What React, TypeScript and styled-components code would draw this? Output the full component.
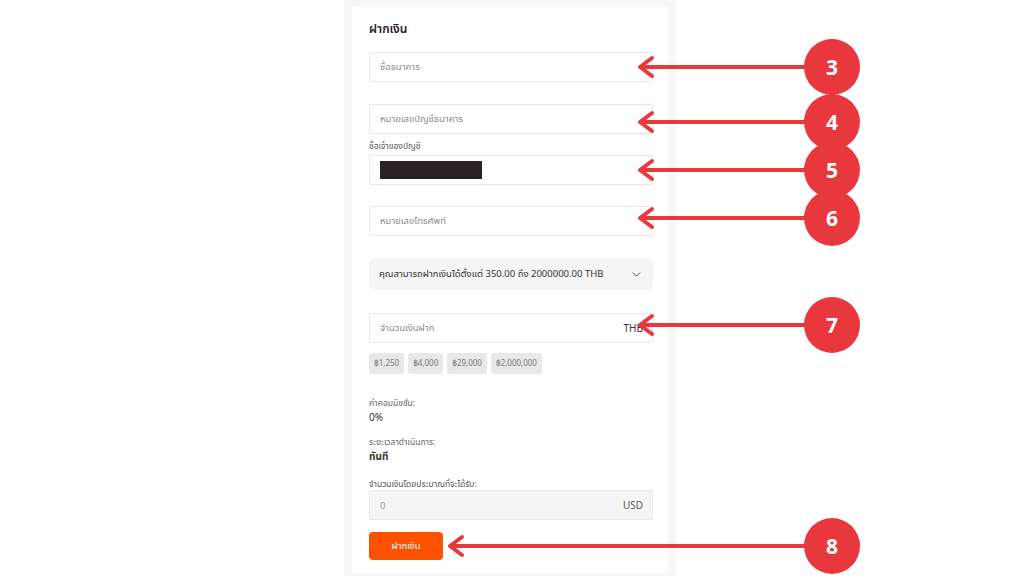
import React from "react";
import styled, { createGlobalStyle } from "styled-components";
import { ChevronDown } from "lucide-react";

const Global = createGlobalStyle`
  html, body { margin: 0; padding: 0; background: #ffffff; }
  body { font-family: "Noto Sans", "Noto Sans Thai", "Open Sans", sans-serif; color: #333; }
  * { box-sizing: border-box; }
`;

const Page = styled.div`
  position: relative;
  width: 1024px;
  height: 576px;
  overflow: hidden;
  background: #ffffff;
`;

const Panel = styled.div`
  margin-left: 344px;
  width: 332px;
  height: 576px;
  background: #f7f7f7;
  padding: 6px 8px 0 8px;
`;

const Card = styled.div`
  background: #ffffff;
  border-radius: 4px;
  padding: 14px 15px 13px 17px;
  display: flex;
  flex-direction: column;
`;

const Title = styled.div`
  font-size: 12px;
  font-weight: 600;
  line-height: 18px;
  color: #222;
  margin-bottom: 14px;
`;

const Field = styled.div<{ $gap?: number; $bg?: string }>`
  height: 30px;
  border: 1px solid #e8e8e8;
  border-radius: 2px;
  background: ${(p) => p.$bg || "#fff"};
  display: flex;
  align-items: center;
  justify-content: space-between;
  padding: 0 9px 0 10px;
  margin-top: ${(p) => p.$gap ?? 0}px;
  font-size: 9.5px;
`;

const Placeholder = styled.span<{ $color?: string }>`
  color: ${(p) => p.$color || "#8a8a8a"};
`;

const Suffix = styled.span<{ $color?: string }>`
  color: ${(p) => p.$color || "#333"};
  font-size: 10px;
`;

const SmallLabel = styled.div<{ $gap?: number }>`
  font-size: 8.5px;
  line-height: 12px;
  color: #555;
  margin-top: ${(p) => p.$gap ?? 0}px;
`;

const Masked = styled.div`
  width: 102px;
  height: 18px;
  background: #2b2222;
`;

const Info = styled.div`
  margin-top: 22px;
  height: 32px;
  background: #f5f5f5;
  border-radius: 6px;
  display: flex;
  align-items: center;
  justify-content: space-between;
  padding: 0 10px 0 10px;
  font-size: 9.5px;
  color: #333;
`;

const Chips = styled.div`
  display: flex;
  gap: 4px;
  margin-top: 10px;
`;

const Chip = styled.div`
  height: 21px;
  padding: 0 5px;
  background: #e8e8e8;
  border-radius: 3px;
  font-size: 8px;
  color: #777;
  display: flex;
  align-items: center;
`;

const StatLabel = styled.div<{ $gap: number }>`
  font-size: 8.5px;
  line-height: 14px;
  color: #666;
  margin-top: ${(p) => p.$gap}px;
`;

const StatValue = styled.div<{ $bold?: boolean }>`
  font-size: 10px;
  line-height: 14px;
  color: #333;
  font-weight: ${(p) => (p.$bold ? 700 : 400)};
`;

const Submit = styled.button`
  margin-top: 12px;
  width: 74px;
  height: 28px;
  border: none;
  border-radius: 4px;
  background: #ff5200;
  color: #fff;
  font-family: inherit;
  font-size: 9.5px;
  cursor: pointer;
`;

const Overlay = styled.svg`
  position: absolute;
  left: 0;
  top: 0;
  width: 1024px;
  height: 576px;
  pointer-events: none;
`;

const marks = [
  { n: "3", y: 67, tip: 640 },
  { n: "4", y: 122, tip: 640 },
  { n: "5", y: 170, tip: 640 },
  { n: "6", y: 218, tip: 640 },
  { n: "7", y: 325, tip: 640 },
  { n: "8", y: 546, tip: 450 },
];

const RED = "#e8383d";

function Annotations() {
  return (
    <Overlay viewBox="0 0 1024 576">
      {marks.map((m) => (
        <g key={m.n}>
          <line x1={m.tip + 2} y1={m.y} x2={810} y2={m.y} stroke={RED} strokeWidth={4} />
          <polyline
            points={`${m.tip + 12},${m.y - 9} ${m.tip},${m.y} ${m.tip + 12},${m.y + 9}`}
            fill="none"
            stroke={RED}
            strokeWidth={4}
            strokeLinecap="round"
            strokeLinejoin="round"
          />
          <circle cx={832} cy={m.y} r={28} fill={RED} />
          <text
            x={832}
            y={m.y + 7.5}
            textAnchor="middle"
            fontFamily="'Open Sans', 'Noto Sans', sans-serif"
            fontWeight={700}
            fontSize={21}
            fill="#ffffff"
          >
            {m.n}
          </text>
        </g>
      ))}
    </Overlay>
  );
}

export default function App() {
  return (
    <Page>
      <Global />
      <Panel>
        <Card>
          <Title>ฝากเงิน</Title>
          <Field>
            <Placeholder>ชื่อธนาคาร</Placeholder>
          </Field>
          <Field $gap={22}>
            <Placeholder>หมายเลขบัญชีธนาคาร</Placeholder>
          </Field>
          <SmallLabel $gap={6}>ชื่อเจ้าของบัญชี</SmallLabel>
          <Field $gap={3}>
            <Masked />
          </Field>
          <Field $gap={21}>
            <Placeholder>หมายเลขโทรศัพท์</Placeholder>
          </Field>
          <Info>
            <span>คุณสามารถฝากเงินได้ตั้งแต่ 350.00 ถึง 2000000.00 THB</span>
            <ChevronDown size={13} strokeWidth={1.6} color="#333" />
          </Info>
          <Field $gap={23}>
            <Placeholder>จำนวนเงินฝาก</Placeholder>
            <Suffix>THB</Suffix>
          </Field>
          <Chips>
            <Chip>฿1,250</Chip>
            <Chip>฿4,000</Chip>
            <Chip>฿29,000</Chip>
            <Chip>฿2,000,000</Chip>
          </Chips>
          <StatLabel $gap={22}>ค่าคอมมิชชั่น:</StatLabel>
          <StatValue>0%</StatValue>
          <StatLabel $gap={11}>ระยะเวลาดำเนินการ:</StatLabel>
          <StatValue $bold>ทันที</StatValue>
          <SmallLabel $gap={15}>จำนวนเงินโดยประมาณที่จะได้รับ:</SmallLabel>
          <Field $bg="#f5f5f5">
            <Placeholder $color="#999">0</Placeholder>
            <Suffix $color="#555">USD</Suffix>
          </Field>
          <div>
            <Submit>ฝากเงิน</Submit>
          </div>
        </Card>
      </Panel>
      <Annotations />
    </Page>
  );
}
